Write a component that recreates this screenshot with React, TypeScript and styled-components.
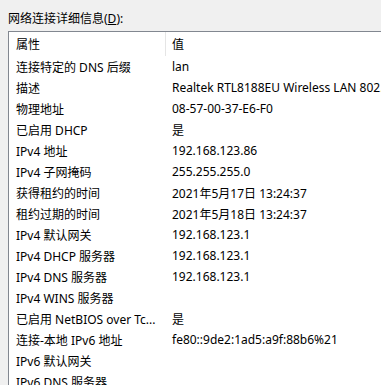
import React from "react";
import styled, { createGlobalStyle } from "styled-components";

const Global = createGlobalStyle`
  html, body {
    margin: 0;
    padding: 0;
    background: #f0f0f0;
    overflow: hidden;
  }
  body {
    font-family: "Noto Sans", "Noto Sans CJK SC", sans-serif;
    font-size: 12px;
    color: #000;
  }
`;

const Page = styled.div`
  width: 381px;
  height: 385px;
  overflow: hidden;
  padding: 10px 0 0 8px;
  box-sizing: border-box;
`;

const Title = styled.div`
  line-height: 18px;
  height: 18px;
  margin-bottom: 3px;
`;

const Key = styled.span`
  text-decoration: underline;
`;

const ListBox = styled.div`
  width: 520px;
  border: 1px solid #828790;
  background: #fff;
`;

const Row = styled.div<{ $header?: boolean }>`
  display: grid;
  grid-template-columns: 157px 1fr;
  height: ${(p) => (p.$header ? "24px" : "21px")};
  align-items: center;
  white-space: nowrap;
`;

const NameCell = styled.div<{ $header?: boolean }>`
  padding-left: 7px;
  height: 100%;
  display: flex;
  align-items: center;
  overflow: hidden;
  border-right: 1px solid ${(p) => (p.$header ? "#e5e5e5" : "transparent")};
`;

const ValueCell = styled.div`
  padding-left: 6px;
  height: 100%;
  display: flex;
  align-items: center;
  overflow: hidden;
`;

const rows: [string, string][] = [
  ["连接特定的 DNS 后缀", "lan"],
  ["描述", "Realtek RTL8188EU Wireless LAN 802.11n USB 2.0 Network Adapter"],
  ["物理地址", "08-57-00-37-E6-F0"],
  ["已启用 DHCP", "是"],
  ["IPv4 地址", "192.168.123.86"],
  ["IPv4 子网掩码", "255.255.255.0"],
  ["获得租约的时间", "2021年5月17日 13:24:37"],
  ["租约过期的时间", "2021年5月18日 13:24:37"],
  ["IPv4 默认网关", "192.168.123.1"],
  ["IPv4 DHCP 服务器", "192.168.123.1"],
  ["IPv4 DNS 服务器", "192.168.123.1"],
  ["IPv4 WINS 服务器", ""],
  ["已启用 NetBIOS over Tc...", "是"],
  ["连接-本地 IPv6 地址", "fe80::9de2:1ad5:a9f:88b6%21"],
  ["IPv6 默认网关", ""],
  ["IPv6 DNS 服务器", ""],
];

export default function App() {
  return (
    <>
      <Global />
      <Page>
        <Title>
          网络连接详细信息(<Key>D</Key>):
        </Title>
        <ListBox>
          <Row $header>
            <NameCell $header>属性</NameCell>
            <ValueCell>值</ValueCell>
          </Row>
          {rows.map(([k, v]) => (
            <Row key={k}>
              <NameCell>{k}</NameCell>
              <ValueCell>{v}</ValueCell>
            </Row>
          ))}
        </ListBox>
      </Page>
    </>
  );
}
